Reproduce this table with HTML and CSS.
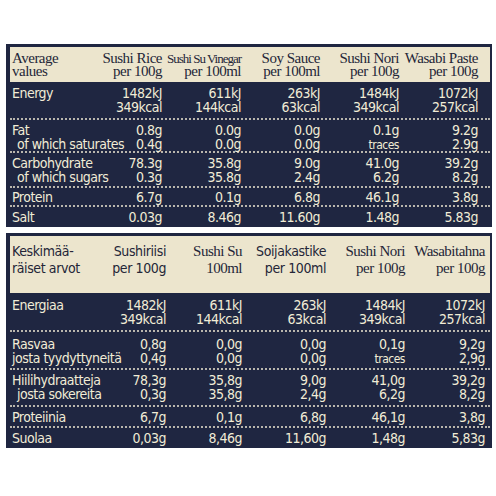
FILE: index.html
```html
<!DOCTYPE html>
<html lang="en">
<head>
    <meta charset="UTF-8">
    <title>Nutrition</title>
    <link rel="stylesheet" href="styles.css">
</head>
<body>
<div class="page">

    <div class="panel panel-en">
        <div class="row head">
            <div class="cell label">Average<br>values</div>
            <div class="cell">Sushi Rice<br>per 100g</div>
            <div class="cell tight">Sushi Su Vinegar<br><span class="wide">per 100ml</span></div>
            <div class="cell">Soy Sauce<br>per 100ml</div>
            <div class="cell">Sushi Nori<br>per 100g</div>
            <div class="cell">Wasabi Paste<br>per 100g</div>
        </div>
        <div class="row r-energy">
            <div class="cell label">Energy</div>
            <div class="cell">1482kJ<br>349kcal</div>
            <div class="cell">611kJ<br>144kcal</div>
            <div class="cell">263kJ<br>63kcal</div>
            <div class="cell">1484kJ<br>349kcal</div>
            <div class="cell">1072kJ<br>257kcal</div>
        </div>
        <div class="row r-fat dotted">
            <div class="cell label">Fat<br><span class="sub">of which saturates</span></div>
            <div class="cell">0.8g<br>0.4g</div>
            <div class="cell">0.0g<br>0.0g</div>
            <div class="cell">0.0g<br>0.0g</div>
            <div class="cell">0.1g<br><span class="small">traces</span></div>
            <div class="cell">9.2g<br>2.9g</div>
        </div>
        <div class="row r-carb dotted">
            <div class="cell label">Carbohydrate<br><span class="sub">of which sugars</span></div>
            <div class="cell">78.3g<br>0.3g</div>
            <div class="cell">35.8g<br>35.8g</div>
            <div class="cell">9.0g<br>2.4g</div>
            <div class="cell">41.0g<br>6.2g</div>
            <div class="cell">39.2g<br>8.2g</div>
        </div>
        <div class="row r-one dotted">
            <div class="cell label">Protein</div>
            <div class="cell">6.7g</div>
            <div class="cell">0.1g</div>
            <div class="cell">6.8g</div>
            <div class="cell">46.1g</div>
            <div class="cell">3.8g</div>
        </div>
        <div class="row r-last dotted">
            <div class="cell label">Salt</div>
            <div class="cell">0.03g</div>
            <div class="cell">8.46g</div>
            <div class="cell">11.60g</div>
            <div class="cell">1.48g</div>
            <div class="cell">5.83g</div>
        </div>
    </div>

    <div class="panel panel-fi">
        <div class="row head head-fi">
            <div class="cell label sans">Keskimää-<br>räiset arvot</div>
            <div class="cell sans">Sushiriisi<br>per 100g</div>
            <div class="cell">Sushi Su<br>100ml</div>
            <div class="cell sans">Soijakastike<br>per 100ml</div>
            <div class="cell">Sushi Nori<br>per 100g</div>
            <div class="cell">Wasabitahna<br>per 100g</div>
        </div>
        <div class="row r-energy">
            <div class="cell label">Energiaa</div>
            <div class="cell">1482kJ<br>349kcal</div>
            <div class="cell">611kJ<br>144kcal</div>
            <div class="cell">263kJ<br>63kcal</div>
            <div class="cell">1484kJ<br>349kcal</div>
            <div class="cell">1072kJ<br>257kcal</div>
        </div>
        <div class="row r-fat-fi dotted">
            <div class="cell label">Rasvaa<br>josta tyydyttyneitä</div>
            <div class="cell">0,8g<br>0,4g</div>
            <div class="cell">0,0g<br>0,0g</div>
            <div class="cell">0,0g<br>0,0g</div>
            <div class="cell">0,1g<br><span class="small">traces</span></div>
            <div class="cell">9,2g<br>2,9g</div>
        </div>
        <div class="row r-carb-fi dotted">
            <div class="cell label">Hiilihydraatteja<br><span class="sub">josta sokereita</span></div>
            <div class="cell">78,3g<br>0,3g</div>
            <div class="cell">35,8g<br>35,8g</div>
            <div class="cell">9,0g<br>2,4g</div>
            <div class="cell">41,0g<br>6,2g</div>
            <div class="cell">39,2g<br>8,2g</div>
        </div>
        <div class="row r-one-fi dotted">
            <div class="cell label">Proteiinia</div>
            <div class="cell">6,7g</div>
            <div class="cell">0,1g</div>
            <div class="cell">6,8g</div>
            <div class="cell">46,1g</div>
            <div class="cell">3,8g</div>
        </div>
        <div class="row r-last dotted">
            <div class="cell label">Suolaa</div>
            <div class="cell">0,03g</div>
            <div class="cell">8,46g</div>
            <div class="cell">11,60g</div>
            <div class="cell">1,48g</div>
            <div class="cell">5,83g</div>
        </div>
    </div>

</div>
</body>
</html>
```

FILE: styles.css
```css
html, body {
    margin: 0;
    background: #fff;
}
.page {
    width: 496px;
    height: 496px;
    padding: 44px 0 0 6px;
    box-sizing: border-box;
    display: flex;
    flex-direction: column;
    gap: 6px;
}

.panel {
    width: 486px;
    box-sizing: border-box;
    padding: 3px 2px 0 4px;
    background: #1f2641;
    color: #f1ecd6;
    font-family: "DejaVu Sans Condensed", "Liberation Sans", sans-serif;
    font-size: 14px;
    letter-spacing: -0.5px;
    line-height: 14px;
}

.row {
    display: grid;
    box-sizing: border-box;
    padding: 4px 12px 0 2px;
}
.panel-en .row {
    grid-template-columns: 71px repeat(5, 79px);
}
.panel-fi .row {
    grid-template-columns: 78px 76px 76px 84px 79px 80px;
    padding-right: 5px;
}
.cell {
    text-align: right;
    white-space: nowrap;
}
.cell.label {
    text-align: left;
}
.sub {
    padding-left: 5px;
}
.small {
    font-size: 12px;
}

.dotted {
    border-top: 2px dotted #b9b6ad;
}

/* cream heading band */
.head {
    background: #ece5cd;
    color: #242638;
    font-family: "Liberation Serif", "DejaVu Serif", serif;
    font-size: 15px;
    letter-spacing: -0.5px;
    line-height: 13px;
    height: 35px;
    padding-top: 5px;
}
.head .tight {
    font-size: 13px;
    letter-spacing: -1px;
}
.head .tight .wide {
    font-size: 15px;
    letter-spacing: -0.5px;
}
.head-fi {
    height: 57px;
    padding-top: 7px;
    line-height: 17px;
}
.head .sans {
    font-family: "DejaVu Sans Condensed", sans-serif;
    font-size: 14px;
    letter-spacing: -0.4px;
}

.r-energy { height: 36px; }
.panel-fi .r-energy { height: 37px; padding-top: 5px; }
.r-fat { height: 33px; padding-top: 3px; }
.r-carb { height: 35px; padding-top: 3px; }
.r-one { height: 19px; padding-top: 2px; }
.r-last { height: 22px; padding-top: 3px; }
.r-fat-fi { height: 38px; padding-top: 5px; }
.r-carb-fi { height: 37px; padding-top: 3px; }
.r-one-fi { height: 21px; padding-top: 3px; }
```
